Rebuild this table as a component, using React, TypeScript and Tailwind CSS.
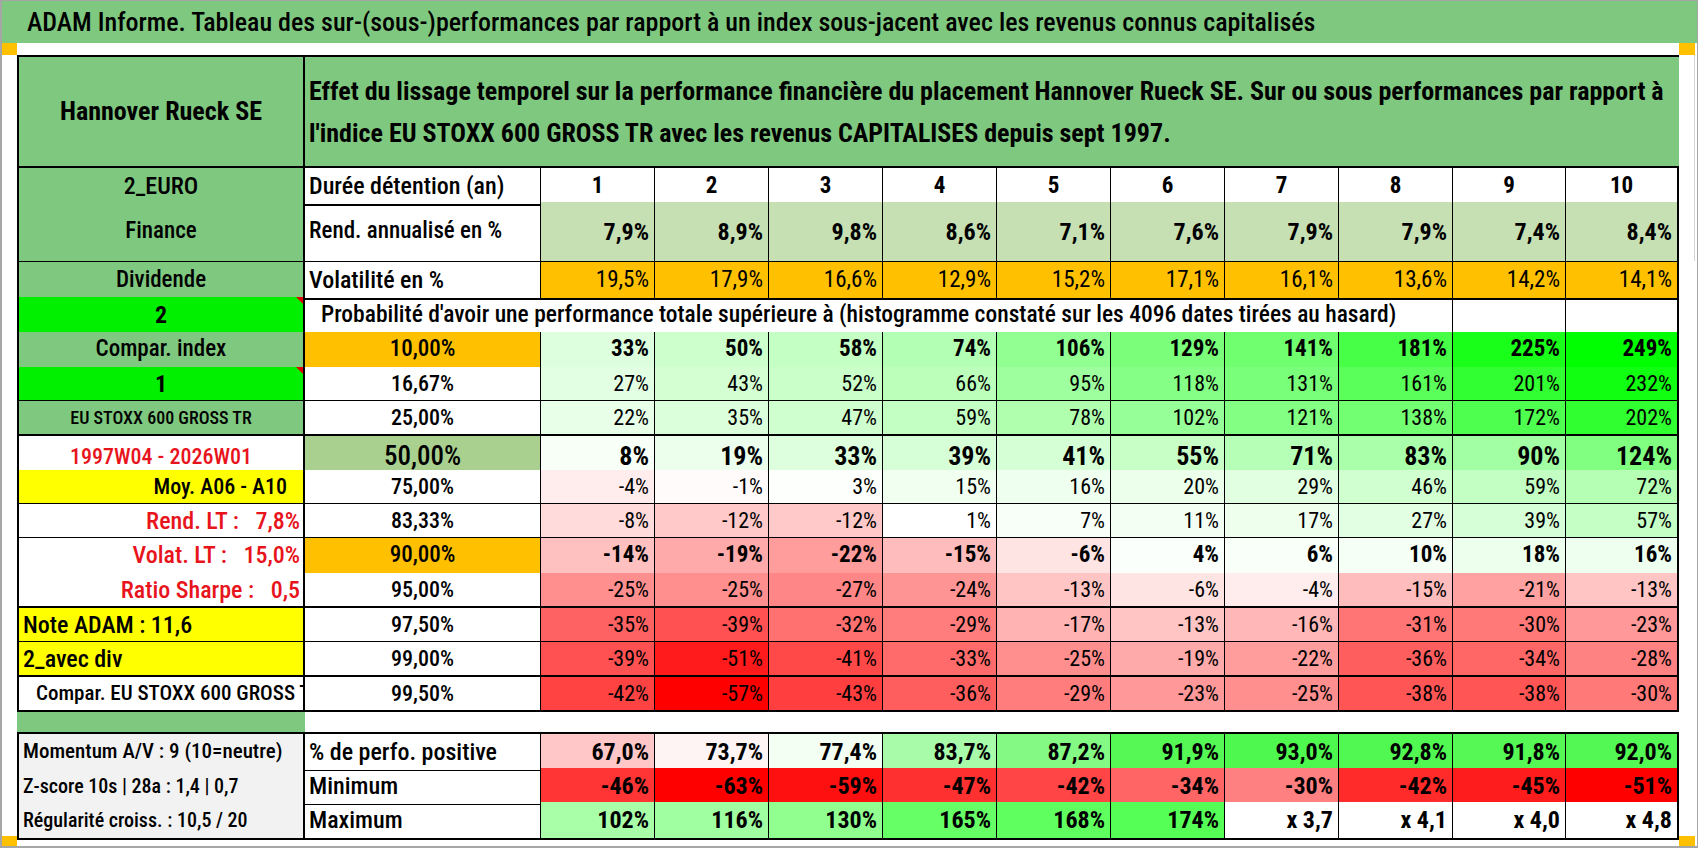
import type { ReactNode } from 'react'

const GRID = 'grid grid-cols-[288px_236px_repeat(8,114px)_113px_113px]'

// red → white → green, midpoint at 0
function heat(v: number) {
  if (v >= 0) {
    const c = Math.round(255 * (1 - Math.min(v / 249, 1)))
    return `rgb(${c},255,${c})`
  }
  const c = Math.round(255 * (1 - Math.min(-v / 57, 1)))
  return `rgb(255,${c},${c})`
}

interface MainRow {
  label: ReactNode
  labelCls: string
  pct: string
  pctCls: string
  vals: number[]
  valCls: string
  h: string
  bottom: string
  flag?: boolean
}

const rows: MainRow[] = [
  { label: 'Compar. index', labelCls: 'bg-[#7fc87f] justify-center text-[23px]', pct: '10,00%', pctCls: 'bg-[#ffc000] text-[23px]', vals: [33, 50, 58, 74, 106, 129, 141, 181, 225, 249], valCls: 'font-bold text-[23px]', h: 'h-[35px]', bottom: 'border-b-2' },
  { label: '1', labelCls: 'bg-[#00f000] justify-center font-bold text-[24px]', pct: '16,67%', pctCls: 'bg-white text-[22px]', vals: [27, 43, 52, 66, 95, 118, 131, 161, 201, 232], valCls: 'font-normal text-[22px]', h: 'h-[34px]', bottom: 'border-b', flag: true },
  { label: 'EU STOXX 600 GROSS TR', labelCls: 'bg-[#7fc87f] justify-center text-[18px]', pct: '25,00%', pctCls: 'bg-white text-[22px]', vals: [22, 35, 47, 59, 78, 102, 121, 138, 172, 202], valCls: 'font-normal text-[22px]', h: 'h-[35px]', bottom: 'border-b-2' },
  { label: '1997W04 - 2026W01', labelCls: 'bg-white justify-center text-[22px] text-[#e8141c]', pct: '50,00%', pctCls: 'bg-[#a9d08e] text-[27px]', vals: [8, 19, 33, 39, 41, 55, 71, 83, 90, 124], valCls: 'font-bold text-[26px]', h: 'h-[34px]', bottom: 'border-b' },
  { label: 'Moy. A06 - A10', labelCls: 'bg-[#ffff00] justify-end pr-[16px] text-[22px]', pct: '75,00%', pctCls: 'bg-white text-[22px]', vals: [-4, -1, 3, 15, 16, 20, 29, 46, 59, 72], valCls: 'font-normal text-[22px]', h: 'h-[34px]', bottom: 'border-b' },
  { label: 'Rend. LT :   7,8%', labelCls: 'bg-white justify-end pr-[3px] text-[24px] text-[#e8141c]', pct: '83,33%', pctCls: 'bg-white text-[22px]', vals: [-8, -12, -12, 1, 7, 11, 17, 27, 39, 57], valCls: 'font-normal text-[22px]', h: 'h-[34px]', bottom: 'border-b-2' },
  { label: 'Volat. LT :   15,0%', labelCls: 'bg-white justify-end pr-[3px] text-[24px] text-[#e8141c]', pct: '90,00%', pctCls: 'bg-[#ffc000] text-[23px]', vals: [-14, -19, -22, -15, -6, 4, 6, 10, 18, 16], valCls: 'font-bold text-[23px]', h: 'h-[35px]', bottom: 'border-b' },
  { label: 'Ratio Sharpe :   0,5', labelCls: 'bg-white justify-end pr-[3px] text-[24px] text-[#e8141c]', pct: '95,00%', pctCls: 'bg-white text-[22px]', vals: [-25, -25, -27, -24, -13, -6, -4, -15, -21, -13], valCls: 'font-normal text-[22px]', h: 'h-[35px]', bottom: 'border-b-2' },
  { label: 'Note ADAM : 11,6', labelCls: 'bg-[#ffff00] justify-start pl-[4px] text-[24px]', pct: '97,50%', pctCls: 'bg-white text-[22px]', vals: [-35, -39, -32, -29, -17, -13, -16, -31, -30, -23], valCls: 'font-normal text-[22px]', h: 'h-[34px]', bottom: 'border-b' },
  { label: '2_avec div', labelCls: 'bg-[#ffff00] justify-start pl-[4px] text-[24px]', pct: '99,00%', pctCls: 'bg-white text-[22px]', vals: [-39, -51, -41, -33, -25, -19, -22, -36, -34, -28], valCls: 'font-normal text-[22px]', h: 'h-[35px]', bottom: 'border-b-2' },
  { label: 'Compar. EU STOXX 600 GROSS TR', labelCls: 'bg-white justify-start pl-[17px] text-[21px]', pct: '99,50%', pctCls: 'bg-white text-[22px]', vals: [-42, -57, -43, -36, -29, -23, -25, -38, -38, -30], valCls: 'font-normal text-[22px]', h: 'h-[35px]', bottom: 'border-b-2' },
]

const years = [1, 2, 3, 4, 5, 6, 7, 8, 9, 10]
const rend = ['7,9%', '8,9%', '9,8%', '8,6%', '7,1%', '7,6%', '7,9%', '7,9%', '7,4%', '8,4%']
const vola = ['19,5%', '17,9%', '16,6%', '12,9%', '15,2%', '17,1%', '16,1%', '13,6%', '14,2%', '14,1%']

const lower = [
  {
    label: 'Momentum A/V : 9 (10=neutre)',
    labelSize: 'text-[21px]',
    name: '% de perfo. positive',
    h: 'h-[36px]',
    bottom: 'border-b',
    cells: [
      ['67,0%', 'bg-[#ffc7c7]'], ['73,7%', 'bg-[#fff4f4]'], ['77,4%', 'bg-[#f4fff4]'], ['83,7%', 'bg-[#a8fba8]'], ['87,2%', 'bg-[#84f984]'],
      ['91,9%', 'bg-[#55f855]'], ['93,0%', 'bg-[#4ff84f]'], ['92,8%', 'bg-[#52f852]'], ['91,8%', 'bg-[#55f855]'], ['92,0%', 'bg-[#54f854]'],
    ],
  },
  {
    label: 'Z-score 10s | 28a : 1,4 | 0,7',
    labelSize: 'text-[20px]',
    name: 'Minimum',
    h: 'h-[34px]',
    bottom: 'border-b',
    cells: [
      ['-46%', 'bg-[#ff3535]'], ['-63%', 'bg-[#ff0000]'], ['-59%', 'bg-[#ff1010]'], ['-47%', 'bg-[#ff3030]'], ['-42%', 'bg-[#ff4545]'],
      ['-34%', 'bg-[#ff6565]'], ['-30%', 'bg-[#ff8080]'], ['-42%', 'bg-[#ff2a2a]'], ['-45%', 'bg-[#ff1c1c]'], ['-51%', 'bg-[#ff0000]'],
    ],
  },
  {
    label: 'Régularité croiss. : 10,5 / 20',
    labelSize: 'text-[20px]',
    name: 'Maximum',
    h: 'h-[35px]',
    bottom: 'border-b-2',
    cells: [
      ['102%', 'bg-[#a8ffa8]'], ['116%', 'bg-[#a0ffa0]'], ['130%', 'bg-[#90ff90]'], ['165%', 'bg-[#66ff66]'], ['168%', 'bg-[#60ff60]'],
      ['174%', 'bg-[#55ff55]'], ['x 3,7', 'bg-white'], ['x 4,1', 'bg-white'], ['x 4,0', 'bg-white'], ['x 4,8', 'bg-white'],
    ],
  },
]

function Flag() {
  return <span className="absolute right-0 top-0 h-0 w-0 border-l-[7px] border-t-[7px] border-l-transparent border-t-[#e00000]" />
}

export default function App() {
  return (
    <div className="flex h-[848px] w-[1698px] flex-col overflow-hidden border-t border-r border-b-2 border-l-2 border-[#a6a6a6] bg-white font-['Roboto_Condensed','Roboto',sans-serif] font-medium text-black">
      <div className="flex h-[42px] shrink-0 items-center bg-[#7fc87f] pl-[25px] text-[26px] whitespace-nowrap">
        ADAM Informe. Tableau des sur-(sous-)performances par rapport à un index sous-jacent avec les revenus connus capitalisés
      </div>

      <div className="flex flex-1">
        <div className="flex w-[15px] flex-col justify-between">
          <div className="h-[12px] bg-[#ffc000]" />
          <div className="h-[10px] bg-[#ffc000]" />
        </div>

        <div className="w-[1662px] pt-[12px]">
          {/* header */}
          <div className={`${GRID} h-[113px]`}>
            <div className="flex items-center justify-center border-t-2 border-r-2 border-b-2 border-l-2 border-black bg-[#7fc87f] text-[26px] font-bold">
              Hannover Rueck SE
            </div>
            <div className="col-span-11 flex items-center border-t-2 border-b-2 border-black bg-[#7fc87f] pl-[4px] text-[26px] leading-[42px] font-bold whitespace-nowrap">
              <div>
                Effet du lissage temporel sur la performance financière du placement Hannover Rueck SE. Sur ou sous performances par rapport à
                <br />
                l'indice EU STOXX 600 GROSS TR avec les revenus CAPITALISES depuis sept 1997.
              </div>
            </div>
          </div>

          {/* durée */}
          <div className={`${GRID} h-[34px] text-[23px]`}>
            <div className="flex items-center justify-center border-r-2 border-b-2 border-l-2 border-black bg-[#7fc87f] text-[24px]">2_EURO</div>
            <div className="flex items-center border-r border-b-2 border-black pl-[4px] text-[24px]">Durée détention (an)</div>
            {years.map((y, i) => (
              <div key={y} className={`flex items-center justify-center border-b-2 border-black font-bold ${i === 9 ? 'border-r-2' : 'border-r'}`}>{y}</div>
            ))}
          </div>

          {/* rendement */}
          <div className={`${GRID} h-[60px] text-[23px]`}>
            <div className="flex items-center justify-center border-r-2 border-b border-l-2 border-black bg-[#7fc87f]">Finance</div>
            <div className="flex items-center border-r border-b border-black pl-[4px]">Rend. annualisé en %</div>
            {rend.map((v, i) => (
              <div key={i} className={`flex items-center justify-end border-b border-black bg-[#c6e0b4] pr-[5px] text-[24px] font-bold ${i === 9 ? 'border-r-2' : 'border-r'}`}>{v}</div>
            ))}
          </div>

          {/* volatilité */}
          <div className={`${GRID} h-[35px] text-[23px]`}>
            <div className="flex items-center justify-center border-r-2 border-b-2 border-l-2 border-black bg-[#7fc87f]">Dividende</div>
            <div className="flex items-center border-r border-b-2 border-black pl-[4px] text-[24px]">Volatilité en %</div>
            {vola.map((v, i) => (
              <div key={i} className={`flex items-center justify-end border-b-2 border-black bg-[#ffc000] pr-[5px] font-normal ${i === 9 ? 'border-r-2' : 'border-r'}`}>{v}</div>
            ))}
          </div>

          {/* probabilité */}
          <div className={`${GRID} h-[35px] text-[23.5px]`}>
            <div className="relative flex items-center justify-center border-r-2 border-b border-l-2 border-black bg-[#00f000] text-[24px] font-bold">
              2
              <Flag />
            </div>
            <div className="col-span-9 flex items-center border-r border-b border-black pl-[16px] whitespace-nowrap">
              Probabilité d'avoir une performance totale supérieure à (histogramme constaté sur les 4096 dates tirées au hasard)
            </div>
            <div className="border-r border-b border-black" />
            <div className="border-r-2 border-b border-black" />
          </div>

          {rows.map((r, ri) => (
            <div key={ri} className={`${GRID} ${r.h}`}>
              <div className={`relative flex items-center overflow-hidden whitespace-pre border-r-2 border-l-2 border-black ${r.bottom} ${r.labelCls}`}>
                {r.label}
                {r.flag && <Flag />}
              </div>
              <div className={`flex items-center justify-center border-r border-black ${r.bottom} ${r.pctCls}`}>{r.pct}</div>
              {r.vals.map((v, i) => (
                <div
                  key={i}
                  className={`flex items-center justify-end border-black pr-[5px] ${r.bottom} ${r.valCls} ${i === 9 ? 'border-r-2' : 'border-r'}`}
                  style={{ backgroundColor: heat(v) }}
                >
                  {v}%
                </div>
              ))}
            </div>
          ))}

          {/* spacer row */}
          <div className={`${GRID} h-[20px]`}>
            <div className="bg-[#7fc87f]" />
          </div>

          {lower.map((r, ri) => (
            <div key={ri} className={`${GRID} ${r.h}`}>
              <div className={`flex items-center overflow-hidden whitespace-nowrap border-r-2 border-l-2 border-black bg-[#f2f2f2] pl-[4px] ${r.labelSize} ${r.bottom} ${ri === 0 ? 'border-t-2' : ''}`}>
                {r.label}
              </div>
              <div className={`flex items-center border-r border-black pl-[4px] text-[24px] ${r.bottom} ${ri === 0 ? 'border-t-2' : ''}`}>{r.name}</div>
              {r.cells.map(([t, bg], i) => (
                <div
                  key={i}
                  className={`flex items-center justify-end border-black pr-[5px] text-[24px] font-bold ${bg} ${r.bottom} ${ri === 0 ? 'border-t-2' : ''} ${i === 9 ? 'border-r-2' : 'border-r'}`}
                >
                  {t}
                </div>
              ))}
            </div>
          ))}
        </div>

        <div className="flex w-[18px] flex-col">
          <div className="h-[12px] w-[16px] bg-[#ffc000]" />
          <div className="ml-[15px] h-[206px] w-[1px] bg-[#d4d4d4]" />
          <div className="flex-1" />
          <div className="h-[10px] w-[16px] bg-[#ffc000]" />
        </div>
      </div>
    </div>
  )
}
